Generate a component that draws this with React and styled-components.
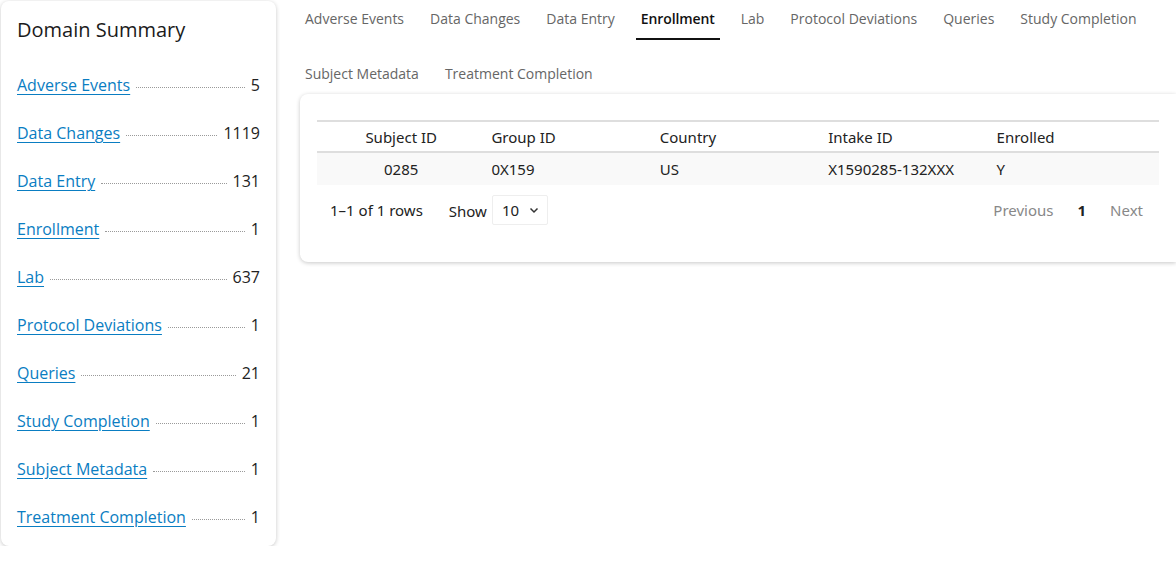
import React from "react";
import styled, { createGlobalStyle } from "styled-components";

const Global = createGlobalStyle`
  html, body { margin: 0; padding: 0; background: #fff; }
  body { font-family: "Open Sans", "Noto Sans", sans-serif; color: #212529; }
  * { box-sizing: border-box; }
`;

const Page = styled.div`
  display: flex;
  align-items: flex-start;
  gap: 24px;
  padding: 1px 0 0 1px;
`;

const Card = styled.div`
  background: #fff;
  border-radius: 8px;
  box-shadow: 0 1px 4px rgba(0, 0, 0, 0.22);
`;

const Sidebar = styled(Card)`
  width: 275px;
  flex: none;
  padding: 15px 16px 0 16px;
`;

const Title = styled.h2`
  margin: 0 0 29px 0;
  font-size: 20px;
  font-weight: 400;
  line-height: 28px;
  color: #1b1b1b;
`;

const SummaryList = styled.ul`
  list-style: none;
  margin: 0;
  padding: 0;
`;

const SummaryRow = styled.li`
  display: flex;
  align-items: baseline;
  height: 48px;
  font-size: 16px;
  line-height: 24px;
  &:last-child {
    height: 41px;
  }
`;

const DomainLink = styled.a`
  color: #0a7dc2;
  text-decoration: underline;
  text-underline-offset: 3px;
  white-space: nowrap;
`;

const Leader = styled.span`
  flex: 1;
  margin: 0 6px;
  border-bottom: 1px dotted #9a9a9a;
  transform: translateY(-3px);
`;

const Count = styled.span`
  color: #222;
`;

const Main = styled.div`
  flex: 1;
  display: flex;
  flex-direction: column;
  min-width: 0;
`;

const Tabs = styled.nav`
  display: flex;
  flex-wrap: wrap;
  column-gap: 16px;
`;

const Tab = styled.a`
  display: block;
  height: 55px;
  padding: 8px 5px 0 5px;
  font-size: 14px;
  line-height: 20px;
  color: ${(p) => (p.$active ? "#111" : "#666")};
  font-weight: ${(p) => (p.$active ? 600 : 400)};
  letter-spacing: ${(p) => (p.$active ? "-0.1px" : "0")};
  position: relative;
  cursor: pointer;
  &::after {
    content: "";
    display: ${(p) => (p.$active ? "block" : "none")};
    position: absolute;
    left: 0;
    right: 0;
    top: 37px;
    height: 2px;
    background: #111;
  }
`;

const TableCard = styled(Card)`
  margin-top: -17px;
  border-radius: 8px 0 0 8px;
  padding: 26px 17px 37px 17px;
  font-family: "Noto Sans", "Open Sans", sans-serif;
  font-size: 15px;
  color: #222;
`;

const Table = styled.table`
  width: 100%;
  border-collapse: collapse;
  table-layout: fixed;
  border-top: 2px solid #dedede;
`;

const Th = styled.th`
  font-weight: 400;
  text-align: ${(p) => p.$align || "left"};
  padding: 4px 6px 3px;
  height: 31px;
  border-bottom: 2px solid #dedede;
`;

const Td = styled.td`
  text-align: ${(p) => p.$align || "left"};
  padding: 4px 6px;
  height: 33px;
  background: #f9f9f9;
`;

const Pager = styled.div`
  display: flex;
  align-items: center;
  padding: 10px 16px 0 13px;
`;

const RowsInfo = styled.span`
  margin-right: 26px;
`;

const ShowLabel = styled.span`
  margin-right: 5px;
  margin-top: 2px;
`;

const SelectBox = styled.div`
  display: flex;
  align-items: center;
  justify-content: space-between;
  width: 56px;
  height: 30px;
  padding: 0 8px 0 9px;
  border: 1px solid #eee;
  border-radius: 2px;
`;

const PageNav = styled.div`
  margin-left: auto;
  display: flex;
  align-items: center;
`;

const PageItem = styled.span`
  color: ${(p) => (p.$current ? "#222" : "#888")};
  font-weight: ${(p) => (p.$current ? 700 : 400)};
  margin: ${(p) => (p.$current ? "0 24px 0 24px" : "0")};
`;

const domains = [
  ["Adverse Events", "5"],
  ["Data Changes", "1119"],
  ["Data Entry", "131"],
  ["Enrollment", "1"],
  ["Lab", "637"],
  ["Protocol Deviations", "1"],
  ["Queries", "21"],
  ["Study Completion", "1"],
  ["Subject Metadata", "1"],
  ["Treatment Completion", "1"],
];

const tabs = [
  "Adverse Events",
  "Data Changes",
  "Data Entry",
  "Enrollment",
  "Lab",
  "Protocol Deviations",
  "Queries",
  "Study Completion",
  "Subject Metadata",
  "Treatment Completion",
];

const Chevron = () => (
  <svg width="10" height="10" viewBox="0 0 10 10">
    <path d="M1.5 3.5 L5 7 L8.5 3.5" fill="none" stroke="#333" strokeWidth="1.5" />
  </svg>
);

export default function App() {
  return (
    <>
      <Global />
      <Page>
        <Sidebar>
          <Title>Domain Summary</Title>
          <SummaryList>
            {domains.map(([name, count]) => (
              <SummaryRow key={name}>
                <DomainLink href="#">{name}</DomainLink>
                <Leader />
                <Count>{count}</Count>
              </SummaryRow>
            ))}
          </SummaryList>
        </Sidebar>
        <Main>
          <Tabs>
            {tabs.map((t) => (
              <Tab key={t} $active={t === "Enrollment"}>
                {t}
              </Tab>
            ))}
          </Tabs>
          <TableCard>
            <Table>
              <thead>
                <tr>
                  <Th $align="center">Subject ID</Th>
                  <Th>Group ID</Th>
                  <Th>Country</Th>
                  <Th>Intake ID</Th>
                  <Th>Enrolled</Th>
                </tr>
              </thead>
              <tbody>
                <tr>
                  <Td $align="center">0285</Td>
                  <Td>0X159</Td>
                  <Td>US</Td>
                  <Td>X1590285-132XXX</Td>
                  <Td>Y</Td>
                </tr>
              </tbody>
            </Table>
            <Pager>
              <RowsInfo>1–1 of 1 rows</RowsInfo>
              <ShowLabel>Show</ShowLabel>
              <SelectBox>
                <span>10</span>
                <Chevron />
              </SelectBox>
              <PageNav>
                <PageItem>Previous</PageItem>
                <PageItem $current>1</PageItem>
                <PageItem>Next</PageItem>
              </PageNav>
            </Pager>
          </TableCard>
        </Main>
      </Page>
    </>
  );
}
